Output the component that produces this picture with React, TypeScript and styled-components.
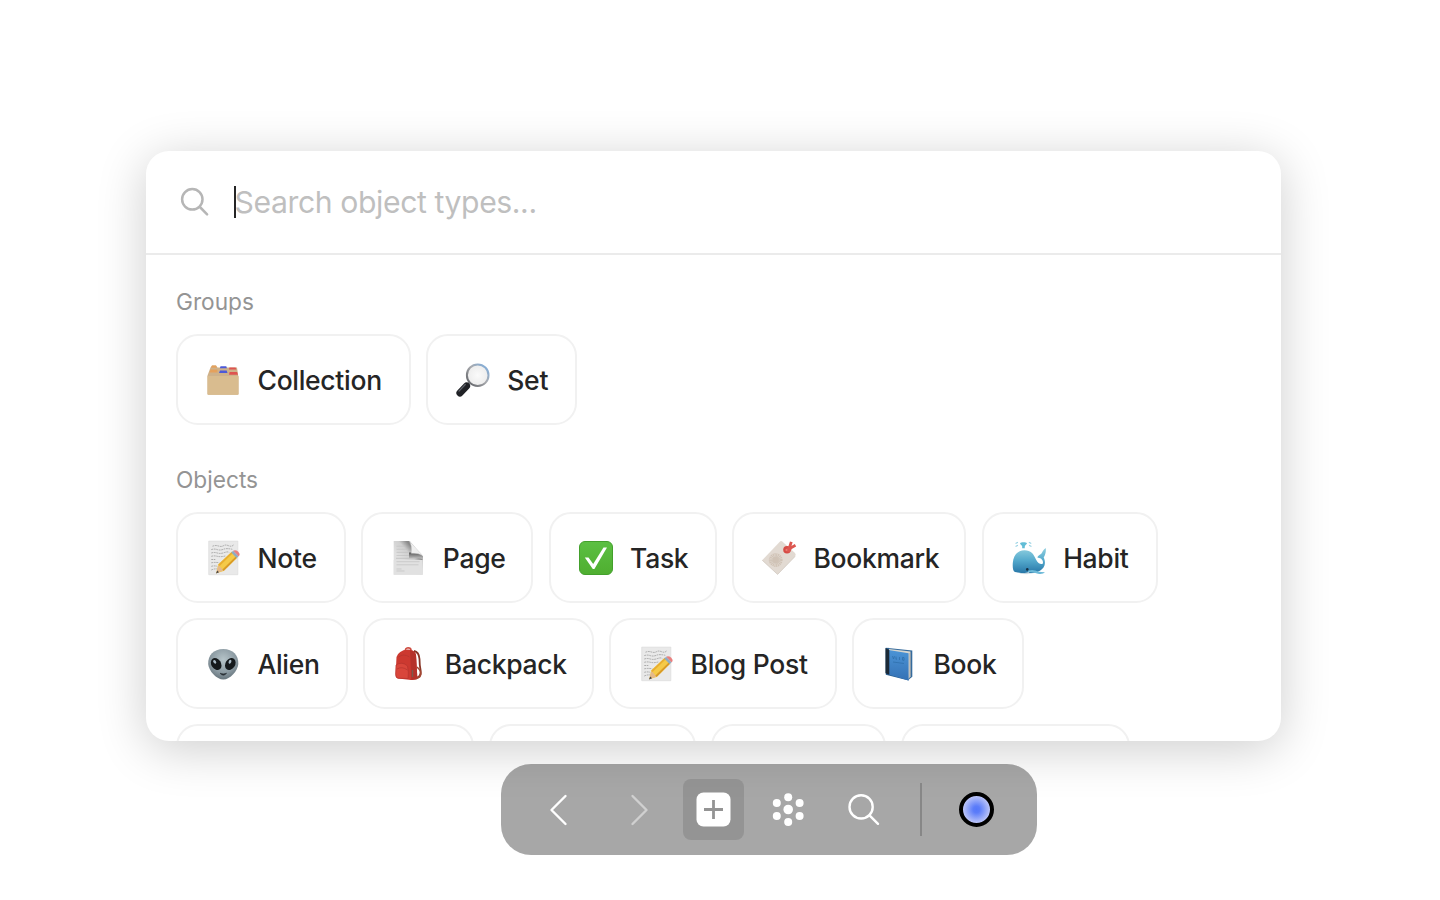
import React from "react";
import styled, { createGlobalStyle } from "styled-components";

const GlobalStyle = createGlobalStyle`
  * { box-sizing: border-box; }
  body { margin: 0; background: #fff; font-family: Inter, "Liberation Sans", sans-serif; }
`;

const Page = styled.main`
  width: 1440px;
  height: 900px;
  padding: 151px 0 0 146px;
  background: #fff;
  overflow: hidden;
`;

const Dialog = styled.section`
  display: flex;
  flex-direction: column;
  width: 1135px;
  height: 590px;
  border-radius: 23px;
  background: #fff;
  overflow: hidden;
  box-shadow: 0 8px 50px rgba(0, 0, 0, 0.2);
`;

const SearchRow = styled.div`
  display: flex;
  flex: none;
  align-items: center;
  height: 104px;
  padding: 0 0 0 34px;
  border-bottom: 2px solid #ebebeb;
`;

const Caret = styled.span`
  width: 2px;
  height: 32px;
  margin-left: 24.4px;
  background: #252525;
`;

const Placeholder = styled.span`
  margin-left: -1.8px;
  font-size: 30.2px;
  line-height: 40px;
  letter-spacing: -0.42px;
  color: #bfbfbf;
  white-space: pre;
`;

const Results = styled.div`
  flex: 1;
  min-height: 0;
  padding: 30px 30px 0;
  overflow: hidden;
`;

const Group = styled.div`
  margin-bottom: 38px;
`;

const GroupTitle = styled.h2`
  margin: 0 0 15px;
  font-size: 22.7px;
  font-weight: 400;
  line-height: 34px;
  color: #949494;
`;

const Chips = styled.div`
  display: flex;
  flex-direction: column;
  gap: 15px;
`;

const ChipRow = styled.div`
  display: flex;
  gap: 15.3px;
`;

const Chip = styled.button<{ $width?: number }>`
  display: flex;
  flex: none;
  align-items: center;
  gap: 17.5px;
  width: ${(p) => (p.$width ? `${p.$width}px` : "auto")};
  height: 91px;
  padding: 0 20px 0 28px;
  border: 2px solid #f1f1f1;
  border-radius: 22px;
  background: #fff;
  color: #252525;
  font: 500 26.5px/36px Inter, "Liberation Sans", sans-serif;
  letter-spacing: -0.3px;
  white-space: nowrap;
`;

const Toolbar = styled.nav`
  position: relative;
  display: flex;
  align-items: center;
  width: 536px;
  height: 91px;
  margin: 23px 0 0 355.4px;
  padding-left: 29.6px;
  border-radius: 30px;
  background: rgba(0, 0, 0, 0.345);
`;

const ToolButton = styled.button<{ $active?: boolean; $gap?: number }>`
  display: flex;
  flex: none;
  align-items: center;
  justify-content: center;
  width: 61px;
  height: 61px;
  margin-right: ${(p) => p.$gap ?? 15}px;
  padding: 0;
  border: 0;
  border-radius: 8px;
  background: ${(p) => (p.$active ? "rgba(0, 0, 0, 0.11)" : "transparent")};
`;

const Divider = styled.span`
  width: 2px;
  height: 53px;
  margin-right: 24px;
  background: #878787;
`;

const SpaceDot = styled.span`
  width: 35px;
  height: 35px;
  border: 4px solid #000;
  border-radius: 50%;
  background: radial-gradient(circle closest-side, #5577fa 0%, #5c7df9 25%, #bcc5f8 100%);
`;

const EmojiSvg = styled.svg`
  display: block;
  flex: none;
  width: 34px;
  height: 34px;
  overflow: visible;
`;

const DividerBox = () => (
  <EmojiSvg viewBox="0 0 34 34">
    <path d="M4.5 4.5 6 2.5h4l1.500 2H31l1.500 10v16.400q0 .8-.8.8H2.300q-.8 0-.8-.8V12.500z" fill="#ceb18a" />
    <path d="M6 2.500h4l1 2.300H5zM4.500 6.500h7v3h-8z" fill="#e5a15c" />
    <path d="M14.500 3.200h5.800l.6 2h-7zM14 7.500h6.700l.8 2.500H13z" fill="#4c59d8" />
    <path d="M23.400 4.400h6.200l.8 2H23zM23.600 9.100h7.500l.9 2.700h-9z" fill="#de5350" />
    <path d="M1.500 13h31v17.900q0 .8-.8.8H2.300q-.8 0-.8-.8z" fill="#d9bc8f" />
  </EmojiSvg>
);

const Magnifier = () => (
  <EmojiSvg viewBox="0 0 34 34">
    <defs>
      <linearGradient id="rim" x1="0" y1="1" x2="1" y2="0">
        <stop stopColor="#595b60" />
        <stop offset=".55" stopColor="#a9abaf" />
        <stop offset="1" stopColor="#79aee4" />
      </linearGradient>
      <radialGradient id="lens">
        <stop stopColor="#fafafa" />
        <stop offset="1" stopColor="#ececec" />
      </radialGradient>
    </defs>
    <path d="m11.200 22.200 3-3" stroke="#777b81" strokeWidth="3" />
    <path d="m10.600 23-6.700 7" stroke="#202226" strokeWidth="7" strokeLinecap="round" />
    <path d="m9.300 21.500-6.300 6.600" stroke="#60646b" strokeWidth="1.200" strokeLinecap="round" />
    <circle cx="21.700" cy="12.200" r="10.800" fill="url(#lens)" stroke="url(#rim)" strokeWidth="2" />
  </EmojiSvg>
);

const Memo = () => (
  <EmojiSvg viewBox="0 0 34 34">
    <path d="M2.700.1h29.200v33.600H2.700z" fill="#e9e9e9" stroke="#dadada" strokeWidth=".6" />
    <g stroke="#999" strokeWidth=".8" fill="none">
      <path d="M6.500 5.200q3-1.200 6-.2t5-.3 5 0 5-.7M5.300 8.600q3-1 6 0t6-.3 9 0M5.300 12q3-1 6 0t7-.4 5 0" strokeDasharray="1.800 .7" />
      <path d="M5.300 15.300q3-.8 6 0t8-.3M5.300 18.500h4M5.300 21.800q4-.8 8 0M5.300 25.300q3-.8 6 0M5.300 29q3-1.500 6-1" strokeDasharray="1.800 .7" />
    </g>
    <path d="m12.200 23.500 13.500-12.700 5.600 5.600L17.700 30l-7.500 2.300z" fill="#f5ca48" />
    <path d="m12.500 24 5 5.600-7.300 2.700z" fill="#e4b98b" />
    <path d="m11.200 29.600 1.800 1.700-3 1.200z" fill="#444" />
    <path d="m12.300 23.500 13.500-12.700 1.300 1.300L13.600 25z" fill="#e8ae30" />
    <path d="m16.400 28.600 13.600-13.300 1.300 1.300L17.700 30z" fill="#d99b26" />
    <path d="m25.200 11.500 2-1.700 5.400 5.400-2 1.700z" fill="#8eabc2" />
    <path d="m27.200 9.800.6-.3q2-.7 4.500 1.200 2.200 2.200.9 4l-.7.600z" fill="#e9807f" />
  </EmojiSvg>
);

const PaperSheet = () => (
  <EmojiSvg viewBox="0 0 34 34">
    <defs>
      <linearGradient id="sheetShade" x1="0" y1="1" x2="1" y2="0">
        <stop offset=".35" stopColor="#e0e0e0" />
        <stop offset=".58" stopColor="#cfcfcf" />
        <stop offset=".72" stopColor="#8a8a8a" />
      </linearGradient>
      <linearGradient id="band" x1="0" y1="0" x2="0" y2="1">
        <stop stopColor="#555" />
        <stop offset="1" stopColor="#c9c9c9" />
      </linearGradient>
    </defs>
    <path d="M2.700.1h15.800l13.200 15.500v18.100h-29z" fill="url(#sheetShade)" />
    <path d="M2.700 19h29v14.700h-29z" fill="#e1e1e1" />
    <path d="M5.500 5.200h9M5.500 8.300h11M5.500 11.400h12M5.500 14.500h13M5.500 20.700h23M5.500 23.800h22M5.500 28h5M5.500 30h8" stroke="#c2c2c2" strokeWidth=".7" />
    <path d="M5 17.300h20" stroke="#bdbdbd" strokeWidth=".8" />
    <path d="M18 11.500q8-.7 13.700 3.600v3q-7-2-13.700-.8z" fill="url(#band)" />
    <path d="M18.500.1 31.700 14.600q-4.500-3-11.400-2.300Q21.300 4.500 18.500.1z" fill="#eee" stroke="#cfcfcf" strokeWidth=".4" />
  </EmojiSvg>
);

const CheckMark = () => (
  <EmojiSvg viewBox="0 0 34 34">
    <defs>
      <linearGradient id="green" x1="0" y1="0" x2="0" y2="1">
        <stop stopColor="#5cc043" />
        <stop offset="1" stopColor="#4fae30" />
      </linearGradient>
    </defs>
    <rect x=".5" y=".5" width="33" height="33" rx="5.500" fill="url(#green)" stroke="#43a02c" />
    <path d="M5.800 16.500h3.700l4.700 6.500L24.500 6.500H28L15.400 28h-1.600z" fill="#fff" />
  </EmojiSvg>
);

const Tag = () => (
  <EmojiSvg viewBox="0 0 34 34">
    <path d="M18.300.2q1-.6 2 .2L33 12q1.500 1.600 0 3.500L15.600 33.400.2 19.200z" fill="#e2dad2" />
    <path d="m.2 19.200 15.400 14.200L33 15.500" fill="none" stroke="#cfc6bd" strokeWidth=".7" />
    <circle cx="13.700" cy="19" r="4.800" fill="none" stroke="#d0c3b6" strokeWidth="4.200" strokeDasharray="1 .5" />
    <circle cx="13.700" cy="19" r="3.200" fill="#d0c3b6" />
    <circle cx="25" cy="8.800" r="3.800" fill="#d64b45" />
    <path d="m24 10 3.500-3.500L29.300.8M26 11l3-4.300 4.500-2.500" fill="none" stroke="#dc5750" strokeWidth="2.800" />
    <circle cx="24.500" cy="9" r="1" fill="#ec7c75" />
  </EmojiSvg>
);

const Whale = () => (
  <EmojiSvg viewBox="0 0 34 34">
    <defs>
      <linearGradient id="whale" x1="0" y1="0" x2="0" y2="1">
        <stop stopColor="#8fcfdf" />
        <stop offset=".5" stopColor="#54a9cc" />
        <stop offset="1" stopColor="#2877a8" />
      </linearGradient>
    </defs>
    <path d="M4 30.500q9 5 20 1l-3-3z" fill="#dce6eb" />
    <path d="M.8 22C1.300 14 6 9.300 12.500 9.300c6.500 0 9 3.700 11.500 9.200 1.500 3.300 4 4.800 6 4.500 1.400-.3 1.500-3-.8-5.200-1-.9-3.200-1-3.900-1.600 1-2 3.200-2.400 4.200-3.700.8-1.200 1.500-3.500 4.200-5.500.5 3-.2 6.500-2 9.500 1.600 3 1.700 7.500-.2 10-2 2.700-4.700 4.300-8 4.900-6 .9-13.500.9-20.500-.4C.9 30 .5 26.500.8 22z" fill="url(#whale)" />
    <path d="M16 29.500q6-1.500 10 1 3 .8 7 .8-2 2.200-7 1.500-4-1.800-10-1.800z" fill="#6cb9d8" />
    <path d="M5 31.300q5 1.500 10 .3l3-1-2 2q-6 1-11-1.300z" fill="#c3d6df" />
    <circle cx="15.300" cy="28.400" r="1.300" fill="#173044" />
    <path d="M10.200 7.300q.6-2.600-2.200-4.500 0-2 3.500-1.500 3.500-.5 3.500 1.500-2.800 1.900-2.200 4.500z" fill="#62bdd6" />
    <path d="M5.500 1.500 4 2.300M5.500 4.500l-1.500.8M17.300 1.500l1.500.8M17.500 4.500l1.500.8" fill="none" stroke="#9ad3e4" strokeWidth="1.200" strokeLinecap="round" />
  </EmojiSvg>
);

const Alien = () => (
  <EmojiSvg viewBox="0 0 34 34">
    <defs>
      <radialGradient id="alien" cx=".5" cy=".35" r=".65">
        <stop stopColor="#b6c4c9" />
        <stop offset=".65" stopColor="#8b9aa2" />
        <stop offset="1" stopColor="#66747c" />
      </radialGradient>
    </defs>
    <path d="M17.300 2C27 2 32.700 8.500 32.300 17c-.4 6.800-8.300 15.600-15 15.600S2.600 23.800 2.200 17C1.800 8.500 7.500 2 17.300 2z" fill="url(#alien)" />
    <ellipse cx="10.200" cy="17" rx="4.800" ry="6.400" transform="rotate(-34 10.200 17)" fill="#15191c" />
    <ellipse cx="24.300" cy="17" rx="4.800" ry="6.400" transform="rotate(34 24.300 17)" fill="#15191c" />
    <ellipse cx="8.700" cy="14.800" rx="1.300" ry="2" transform="rotate(-34 8.700 14.800)" fill="#a9bac6" />
    <ellipse cx="24" cy="14.800" rx="1.300" ry="2" transform="rotate(24 24 14.800)" fill="#a9bac6" />
    <path d="M14 26.300q3.300 3.800 6.600 0-3.300 1.200-6.600 0z" fill="#292f34" stroke="#292f34" strokeWidth=".6" />
  </EmojiSvg>
);

const Backpack = () => (
  <EmojiSvg viewBox="0 0 34 34">
    <path d="M21 4q5 1 5.500 8 0 6 1.200 12 .8 6-5.500 7.500" fill="none" stroke="#883526" strokeWidth="1.800" />
    <path d="M24 20q6 5 2.500 10l-4 2" fill="none" stroke="#a44732" strokeWidth="1.600" />
    <path d="M12.500 4q-.5-3 2.500-3.300 3 0 3 2.300" fill="none" stroke="#ce4c40" strokeWidth="1.600" />
    <path d="M3.500 10q2-6.500 11-7.500 7 0 8.500 5l1.300 23q-2 3.300-8.300 2.300L5 31.500Q2.500 31 2.700 27z" fill="#cc3930" />
    <path d="M17 3q5 1 6 5l1.300 22.500q-1 2.500-6 2.500z" fill="#b5322a" />
    <path d="M3 18q6-4 11.500 1 1.500 6 .5 12.500L5 31.200Q2.500 31 2.700 27z" fill="#d9463b" stroke="#b5342e" strokeWidth=".7" />
    <path d="M5.500 10q5-4 11 0M4 22q5-3 10.500 1" fill="none" stroke="#b5342e" strokeWidth=".7" />
    <path d="M19.500 23v7" stroke="#7c5a4b" strokeWidth="1.500" />
  </EmojiSvg>
);

const BlueBook = () => (
  <EmojiSvg viewBox="0 0 34 34">
    <defs>
      <linearGradient id="cover" x1="0" y1="0" x2="0" y2="1">
        <stop stopColor="#4b94d6" />
        <stop offset="1" stopColor="#3471b5" />
      </linearGradient>
    </defs>
    <path d="M3.800.8 30.300 3.500v26.300l-3.700 3L3.800 26z" fill="#356b9d" />
    <path d="m7 2 21.500 2.600v25l-2.200 2.300L7 25z" fill="#d7d6cf" />
    <path d="M27.500 6v25M28.500 5v25" stroke="#9c9d99" strokeWidth=".4" />
    <path d="M3.800 1.200 6.500.8l.8 25.400 19.300 6.600v.8L3.800 27.800z" fill="#285e91" />
    <path d="m6.500 3 20.100 3.300v27.300L6.500 27.500z" fill="url(#cover)" />
    <path d="m3.500 1 3.800 2v24.700l-3.800-1.500z" fill="#1c2a37" />
    <path d="m10.500 9 1 3 1-2.800m1.500.4v2.600l1-.2m2.500-2v3m3-2.600 1.500.2v2.800l-1.500-.3zM11 15l11 1.500" fill="none" stroke="#2f70ac" strokeWidth=".8" />
  </EmojiSvg>
);

type ObjectType = { label?: string; icon?: React.ReactNode; width?: number };

const groups: ObjectType[] = [
  { label: "Collection", icon: <DividerBox />, width: 234.5 },
  { label: "Set", icon: <Magnifier />, width: 151 },
];

const objects: ObjectType[][] = [
  [
    { label: "Note", icon: <Memo />, width: 170 },
    { label: "Page", icon: <PaperSheet />, width: 172 },
    { label: "Task", icon: <CheckMark />, width: 168 },
    { label: "Bookmark", icon: <Tag />, width: 234.5 },
    { label: "Habit", icon: <Whale />, width: 176.5 },
  ],
  [
    { label: "Alien", icon: <Alien />, width: 172 },
    { label: "Backpack", icon: <Backpack />, width: 230.5 },
    { label: "Blog Post", icon: <Memo />, width: 227.5 },
    { label: "Book", icon: <BlueBook />, width: 172 },
  ],
  [{ width: 298 }, { width: 206.5 }, { width: 175 }, { width: 228.5 }],
];

const TypeRow = ({ items }: { items: ObjectType[] }) => (
  <ChipRow>
    {items.map((item, i) => (
      <Chip key={i} $width={item.width}>
        {item.icon}
        {item.label}
      </Chip>
    ))}
  </ChipRow>
);

const Glyph = styled.svg`
  display: block;
  flex: none;
  fill: none;
  stroke-linecap: round;
  stroke-linejoin: round;
`;

export default function App() {
  return (
    <>
      <GlobalStyle />
      <Page>
        <Dialog>
          <SearchRow>
            <Glyph width="30" height="30" viewBox="0 0 30 30" stroke="#b6b6b6" strokeWidth="2.5">
              <circle cx="12.300" cy="12.300" r="10.200" />
              <path d="m19.900 20 7.200 7.300" />
            </Glyph>
            <Caret />
            <Placeholder>Search object types...</Placeholder>
          </SearchRow>
          <Results>
            <Group>
              <GroupTitle>Groups</GroupTitle>
              <TypeRow items={groups} />
            </Group>
            <Group>
              <GroupTitle>Objects</GroupTitle>
              <Chips>
                {objects.map((row, i) => (
                  <TypeRow key={i} items={row} />
                ))}
              </Chips>
            </Group>
          </Results>
        </Dialog>
        <Toolbar>
          <ToolButton aria-label="Back" $gap={16}>
            <Glyph width="36" height="36" viewBox="0 0 36 36" stroke="#fff" strokeWidth="2.4">
              <path d="M22.500 4 8.500 18l14 14" />
            </Glyph>
          </ToolButton>
          <ToolButton aria-label="Forward" $gap={14}>
            <Glyph width="36" height="36" viewBox="0 0 36 36" stroke="#d0d0d0" strokeWidth="2.4">
              <path d="m12.500 4 14 14-14 14" />
            </Glyph>
          </ToolButton>
          <ToolButton aria-label="Create" $active>
            <Glyph width="35" height="35" viewBox="0 0 35 35">
              <rect x=".5" y=".5" width="34" height="34" rx="7" fill="#fff" />
              <path d="M17.500 8v19M8 17.500h19" stroke="#949494" strokeWidth="2.800" strokeLinecap="butt" />
            </Glyph>
          </ToolButton>
          <ToolButton aria-label="Graph">
            <Glyph width="36" height="36" viewBox="0 0 36 36">
              <g fill="#fff">
                <circle cx="17.200" cy="17.500" r="4.800" />
                <circle cx="17.200" cy="5.300" r="4" />
                <circle cx="17.200" cy="29.900" r="4" />
                <circle cx="5.800" cy="10.900" r="4" />
                <circle cx="28.600" cy="10.900" r="4" />
                <circle cx="5.800" cy="24.100" r="4" />
                <circle cx="28.600" cy="24.100" r="4" />
              </g>
            </Glyph>
          </ToolButton>
          <ToolButton aria-label="Search" $gap={24}>
            <Glyph width="36" height="36" viewBox="0 0 36 36" stroke="#fff" strokeWidth="2.4">
              <circle cx="14.100" cy="14.900" r="11.600" />
              <path d="m22.500 23.300 8.500 8.500" />
            </Glyph>
          </ToolButton>
          <Divider />
          <ToolButton aria-label="Space" $gap={0}>
            <SpaceDot />
          </ToolButton>
        </Toolbar>
      </Page>
    </>
  );
}
